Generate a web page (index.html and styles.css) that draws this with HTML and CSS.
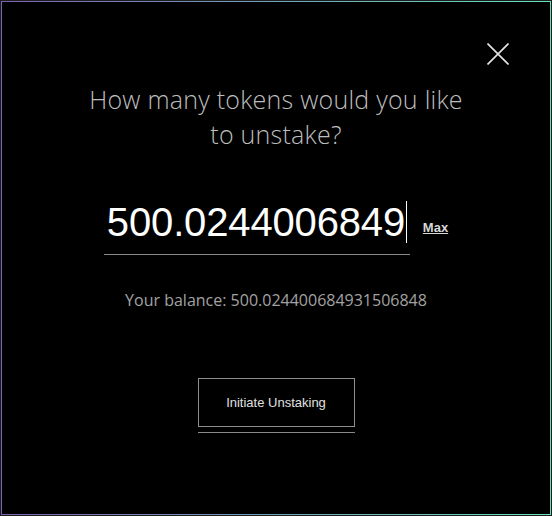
FILE: index.html
```html
<!DOCTYPE html>
<html>
<head>
<meta charset="utf-8">
<link rel="stylesheet" href="styles.css">
</head>
<body>
<div class="modal">
  <button class="close" aria-label="Close">
    <svg width="22" height="22" viewBox="0 0 22 22"><path d="M0.5 0.5 L21.5 21.5 M21.5 0.5 L0.5 21.5" stroke="#e6e6e6" stroke-width="1.6" fill="none"/></svg>
  </button>
  <h1 class="title">How many tokens would you like<br>to unstake?</h1>
  <div class="amount-row">
    <div class="amount-field">
      <span class="amount">500.0244006849</span><span class="caret"></span>
    </div>
    <a class="max" href="#">Max</a>
  </div>
  <p class="balance">Your balance: 500.024400684931506848</p>
  <div class="actions">
    <button class="primary">Initiate Unstaking</button>
  </div>
</div>
</body>
</html>
```
FILE: styles.css
```css
html, body { height: 100%; }
body {
  margin: 0;
  padding: 1px;
  box-sizing: border-box;
  background: #1c1c1c;
}
.modal {
  position: relative;
  box-sizing: border-box;
  height: 514px;
  background: #000;
  border: 1px solid;
  border-image: linear-gradient(to right, #7d62b3, #62e2bc) 1;
  display: flex;
  flex-direction: column;
  align-items: center;
  padding-top: 80px;
}
.close {
  position: absolute;
  top: 41px;
  right: 41px;
  background: none;
  border: 0;
  padding: 0;
  width: 22px;
  height: 22px;
}
.close svg { display: block; }
.title {
  margin: 0;
  font-family: "Open Sans", "Noto Sans", sans-serif;
  font-weight: 300;
  font-size: 25px;
  letter-spacing: 0.25px;
  line-height: 35px;
  color: #bdbdbd;
  text-align: center;
}
.amount-row {
  display: flex;
  align-items: center;
  margin-top: 47px;
}
.amount-field {
  width: 306px;
  box-sizing: border-box;
  border-bottom: 1px solid #8a8a8a;
  padding: 2px 0 11px 3px;
  display: flex;
  align-items: center;
}
.amount {
  font-family: "Liberation Sans", Arial, sans-serif;
  font-size: 40px;
  line-height: 42px;
  color: #fff;
  letter-spacing: -0.15px;
}
.caret {
  flex: none;
  display: inline-block;
  width: 1px;
  height: 42px;
  background: #fff;
  margin-left: 1px;
}
.max {
  margin-left: 13px;
  font-family: "Liberation Sans", Arial, sans-serif;
  font-size: 13px;
  font-weight: bold;
  color: #d8d8d8;
  text-decoration: underline;
}
.balance {
  margin: 33px 0 0;
  font-family: "Open Sans", "Noto Sans", sans-serif;
  font-size: 16px;
  line-height: 24px;
  color: #a3a3a3;
}
.actions {
  margin-top: 66px;
  padding-bottom: 5px;
  border-bottom: 1px solid #8a8a8a;
}
.primary {
  display: block;
  width: 157px;
  height: 49px;
  background: #000;
  border: 1px solid #8f8f8f;
  color: #e0e0e0;
  font-family: "Liberation Sans", Arial, sans-serif;
  font-size: 13px;
}
```
